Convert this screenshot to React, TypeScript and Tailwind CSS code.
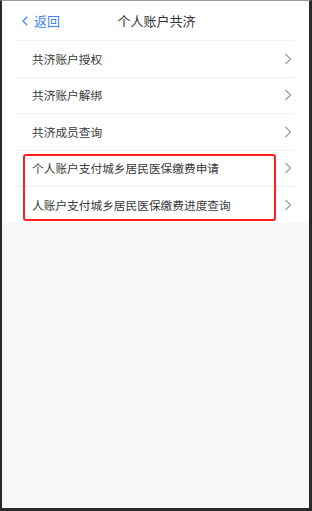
import { ChevronLeft } from "lucide-react";

const rows = [
  "共济账户授权",
  "共济账户解绑",
  "共济成员查询",
  "个人账户支付城乡居民医保缴费申请",
  "人账户支付城乡居民医保缴费进度查询",
];

const Arrow = () => (
  <svg width="8" height="12" viewBox="0 0 8 12" className="text-[#9a9a9a]">
    <polyline points="1.5,1 6.5,6 1.5,11" fill="none" stroke="currentColor" strokeWidth="1.2" />
  </svg>
);

const App = () => {
  return (
    <div
      className="w-[312px] h-[511px] flex flex-col bg-[#f6f7f9] border-t border-t-[#9a9a9a] border-l-2 border-l-[#2a2a2a] border-r-[3px] border-r-[#2a2a2a] border-b-[3px] border-b-[#2a2a2a] overflow-hidden"
      style={{ fontFamily: '"Noto Sans CJK SC", "Noto Sans", sans-serif' }}
    >
      <div className="bg-white">
        <div className="relative h-[39px] flex items-center justify-center">
          <div className="absolute left-[15px] top-0 h-full flex items-center text-[#3b82f6] text-[13px]">
            <ChevronLeft size={16} strokeWidth={1.6} />
            <span className="ml-[1px]">返回</span>
          </div>
          <span className="text-[13px] text-[#333] ml-[2px]">个人账户共济</span>
        </div>
        <div className="relative mx-[14px]">
          {rows.map((r) => (
            <div
              key={r}
              className="h-[36.5px] flex items-center justify-between pl-[16px] pr-[3px] border-t border-[#f0f0f0]"
            >
              <span className="text-[11.7px] text-[#3a3a3a]">{r}</span>
              <Arrow />
            </div>
          ))}
          <div className="absolute left-[7px] top-[114px] w-[253px] h-[67px] border-2 border-[#ff1f1f] rounded-[3px] pointer-events-none" />
        </div>
      </div>
      <div className="flex-1" />
    </div>
  );
};

export default App;
